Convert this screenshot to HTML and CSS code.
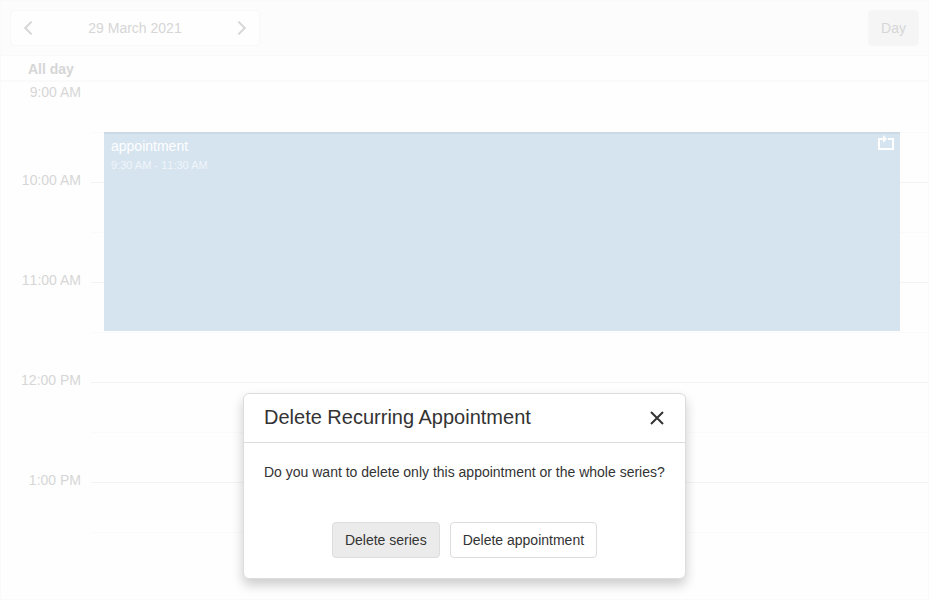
FILE: index.html
```
<!DOCTYPE html>
<html lang="en">
<head>
<meta charset="utf-8">
<title>Scheduler</title>
<link rel="stylesheet" href="styles.css">
</head>
<body>
<div class="scheduler">
  <header class="toolbar">
    <div class="navigator">
      <svg class="chevron" width="18" height="18" viewBox="0 0 18 18"><path d="M12.6 2.6 6.2 9l6.4 6.4"/></svg>
      <span class="date">29 March 2021</span>
      <svg class="chevron" width="18" height="18" viewBox="0 0 18 18"><path d="M5.4 2.6 11.8 9l-6.4 6.4"/></svg>
    </div>
    <button class="view">Day</button>
  </header>
  <div class="all-day">All day</div>
  <main class="timetable">
    <div class="times">
      <div class="time first">9:00 AM</div>
      <div class="time">10:00 AM</div>
      <div class="time"><span class="digits">11</span>:00 AM</div>
      <div class="time">12:00 PM</div>
      <div class="time">1:00 PM</div>
    </div>
    <div class="cells">
      <div class="cell first"></div>
      <div class="cell hour"></div>
      <div class="cell"></div>
      <div class="cell hour"></div>
      <div class="cell"></div>
      <div class="cell hour"></div>
      <div class="cell"></div>
      <div class="cell hour"></div>
      <div class="cell"></div>
      <article class="appointment">
        <div>
          <div class="subject">appointment</div>
          <div class="duration">9:30 AM - <span class="digits">11</span>:30 AM</div>
        </div>
        <svg class="recurrence" width="16" height="16" viewBox="0 0 16 16"><path class="loop" d="M6 4H1v10h14V4h-5"/><path class="arrow" d="M5 0l4 4-4 4z"/></svg>
      </article>
    </div>
  </main>
</div>
<div class="dialog" role="dialog">
  <div class="dialog-head">
    <h1>Delete Recurring Appointment</h1>
    <svg class="close" width="16" height="16" viewBox="0 0 16 16"><path d="M2 2l12 12M14 2L2 14"/></svg>
  </div>
  <p class="message">Do you want to delete only this appointment or the whole series?</p>
  <div class="actions">
    <button class="button focused">Delete series</button>
    <button class="button">Delete appointment</button>
  </div>
</div>
</body>
</html>
```
FILE: styles.css
```
* { box-sizing: border-box; }

body {
  margin: 0;
  font: 14px/18px "Liberation Sans", Arial, sans-serif;
  color: #333;
  background: #fefefe;
}

button { font: inherit; margin: 0; }

.digits { font-kerning: none; }

.scheduler {
  display: flex;
  flex-direction: column;
  width: 929px;
  height: 600px;
  overflow: hidden;
  border: 1px solid #fafafa;
  color: #d6d6d6;
}

.toolbar {
  display: flex;
  flex: none;
  align-items: center;
  justify-content: space-between;
  height: 55px;
  padding: 0 9px;
  background: #fcfcfc;
  border-bottom: 1px solid #f9f9f9;
}

.navigator {
  display: flex;
  align-items: center;
  justify-content: space-between;
  width: 250px;
  height: 36px;
  padding: 0 8px;
  background: #fefefe;
  border: 1px solid #f8f8f8;
  border-radius: 4px;
}

.chevron {
  fill: none;
  stroke: #d6d6d6;
  stroke-width: 2;
}

.view {
  width: 51px;
  height: 36px;
  padding: 0;
  color: #d6d6d6;
  background: #f5f5f5;
  border: 1px solid #f7f7f7;
  border-radius: 4px;
}

.all-day {
  flex: none;
  height: 26px;
  padding: 4px 0 0 27px;
  font-weight: bold;
  border-bottom: 2px solid #fafafa;
}

.timetable {
  display: flex;
  flex: 1;
  min-height: 0;
}

.times {
  width: 90px;
  padding: 1px 10px 0 0;
  text-align: right;
}

.time { height: 100px; }
.time.first { height: 88px; }

.cells {
  position: relative;
  flex: 1;
}

.cell {
  height: 50px;
  border-bottom: 1px solid #fafafa;
}

.cell.first { height: 51px; }
.cell.hour { border-color: #f3f3f3; }

.appointment {
  position: absolute;
  top: 50px;
  left: 13px;
  right: 28px;
  display: flex;
  justify-content: space-between;
  height: 199px;
  padding: 3px 6px 0 7px;
  color: #fefefe;
  background: #d6e4f0;
  border-top: 2px solid #cddae5;
}

.duration {
  margin-top: 1px;
  font-size: 11px;
  color: #f0f5f9;
}

.recurrence { margin-top: -2px; }
.loop { fill: none; stroke: #fefefe; stroke-width: 2; }
.arrow { fill: #fefefe; }

.dialog {
  position: absolute;
  top: 393px;
  left: 243px;
  width: 443px;
  height: 186px;
  background: #fff;
  border: 1px solid #ddd;
  border-radius: 6px;
  box-shadow: 0 6px 12px rgba(0, 0, 0, .2);
}

.dialog-head {
  display: flex;
  align-items: center;
  justify-content: space-between;
  height: 49px;
  padding: 0 20px;
  border-bottom: 1px solid #ddd;
}

.dialog-head h1 {
  margin: 0 0 2px;
  font-size: 20px;
  line-height: 24px;
  font-weight: normal;
}

.close {
  fill: none;
  stroke: #333;
  stroke-width: 2;
}

.message {
  margin: 20px;
  white-space: nowrap;
}

.actions {
  display: flex;
  justify-content: center;
  gap: 10px;
  margin-top: 41px;
}

.button {
  height: 36px;
  padding: 0 12px;
  color: #333;
  background: #fff;
  border: 1px solid #ddd;
  border-radius: 4px;
}

.button.focused { background: #ebebeb; }
```
